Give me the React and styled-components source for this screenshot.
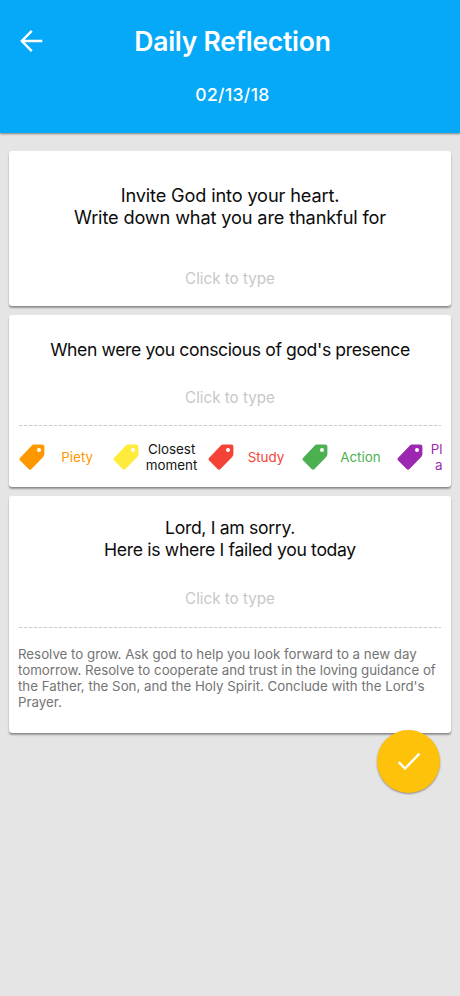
import React from 'react'
import styled, { createGlobalStyle } from 'styled-components';

const GlobalStyle = createGlobalStyle`
* {
  box-sizing: border-box;
}
body {
  margin: 0;
  background: #e5e5e5;
  font-family: Inter, "Liberation Sans", sans-serif;
}
`;

const Container = styled.div`
min-height: 996px;
background: #e5e5e5;
`;
const Header = styled.header`
height: 133px;
padding-top: 24px;
background: #05a9f7;
color: white;
box-shadow: 0 1px 2px rgba(0, 0, 0, 0.45);
`;
const TitleRow = styled.div`
display: grid;
grid-template-columns: 64px 1fr 60px;
align-items: center;
height: 34px;
`;
const BackButton = styled.button`
display: flex;
width: 24px;
height: 24px;
margin-left: 19px;
padding: 0;
border: none;
background: none;
`;
const Title = styled.h1`
margin: 0;
padding-left: 1px;
font-size: 26.5px;
font-weight: 600;
line-height: 34px;
letter-spacing: -0.25px;
text-align: center;
white-space: nowrap;
`;
const DateText = styled.div`
margin-top: 26px;
padding-left: 5px;
font-size: 17.5px;
font-weight: 500;
line-height: 22px;
letter-spacing: 0.35px;
text-align: center;
`;
const Cards = styled.main`
padding: 18px 9px 0;
`;
const Card = styled.section`
height: ${(props) => props.$height}px;
margin-bottom: 9px;
padding: ${(props) => props.$top}px 9px 0;
border-radius: 3px;
background: white;
box-shadow: 0 2px 2px rgba(0, 0, 0, 0.32), 0 1px 1px rgba(0, 0, 0, 0.12);
`;
const Prompt = styled.h2`
margin: 0;
color: #0c0c0c;
font-size: ${(props) => props.$size || 17.6}px;
font-weight: 400;
line-height: ${(props) => props.$line || 22}px;
letter-spacing: ${(props) => props.$spacing || 0}px;
text-align: center;
white-space: nowrap;
`;
const Answer = styled.div`
margin-top: ${(props) => props.$gap}px;
color: #c7c7c9;
font-size: 15.2px;
line-height: 20px;
text-align: center;
`;
const Divider = styled.div`
height: 1px;
margin: ${(props) => props.$gap}px 1px 0;
background: repeating-linear-gradient(90deg, #cbcbcb 0 3px, #f4f4f4 3px 5px);
`;
const Tags = styled.div`
display: flex;
height: 62px;
margin: 0 0 0 1px;
overflow: hidden;
`;
const Tag = styled.div`
display: flex;
flex: 0 0 ${(props) => (props.$last ? 46 : 94.4)}px;
align-items: center;
color: ${(props) => props.color};
`;
const TagLabel = styled.span`
flex: 1;
padding: ${(props) => (props.$right ? "1px 0 0" : "1px 4px 0 0")};
color: ${(props) => props.$text};
font-size: 13.4px;
line-height: 15.5px;
text-align: ${(props) => (props.$right ? "right" : "center")};
white-space: pre-line;
`;
const Closing = styled.p`
margin: 19px 0 0;
color: #747474;
font-size: 13.3px;
line-height: 15.9px;
white-space: pre-line;
`;
const DoneButton = styled.button`
position: absolute;
top: 730px;
left: 377px;
display: flex;
align-items: center;
justify-content: center;
width: 63px;
height: 63px;
padding: 0;
border: none;
border-radius: 50%;
background: #fec20b;
box-shadow: 0 1px 2px rgba(0, 0, 0, 0.4);
`;

const tags = [
  { label: "Piety", color: "#ff9800" },
  { label: "Closest\nmoment", color: "#ffeb3b", text: "#151515" },
  { label: "Study", color: "#f44336" },
  { label: "Action", color: "#4caf50" },
  { label: "Pl\na", color: "#9c27b0" },
];

const BackIcon = () => (
  <svg width="24" height="24" viewBox="0 0 24 24" fill="none" stroke="white" strokeWidth="2.4">
    <path d="M23.3 12H3.5M12.8 1.9L2.8 12L12.8 22.1" />
  </svg>
);

const TagIcon = () => (
  <svg width="26" height="27" viewBox="0 0 26 27" fill="currentColor">
    <path
      fillRule="evenodd"
      d="M15 .6H22.8Q25.4 .6 25.4 3V9.8Q25.4 11.7 24.2 13L12.5 25Q11 26.4 9.6 25L1.2 16.5Q-.2 15.2 1.2 13.8L12.6 1.7Q13.6.6 15 .6ZM20 3.9a2 2 0 1 0 0 4a2 2 0 1 0 0-4Z"
    />
  </svg>
);

const CheckIcon = () => (
  <svg width="26" height="22" viewBox="0 0 26 22" fill="none" stroke="white" strokeWidth="2.4">
    <path d="M2.6 11L9 17.6L23.4 2.6" />
  </svg>
);

const App = () => {
  return (
    <Container>
      <GlobalStyle />
      <Header>
        <TitleRow>
          <BackButton aria-label="Back"><BackIcon /></BackButton>
          <Title>Daily Reflection</Title>
        </TitleRow>
        <DateText>02/13/18</DateText>
      </Header>
      <Cards>
        <Card $height={155} $top={32.5}>
          <Prompt $size={18.2} $spacing={-0.15}>Invite God into your heart.<br />Write down what you are thankful for</Prompt>
          <Answer $gap={41}>Click to type</Answer>
        </Card>
        <Card $height={172} $top={23.5}>
          <Prompt $spacing={-0.39}>When were you conscious of god's presence</Prompt>
          <Answer $gap={27}>Click to type</Answer>
          <Divider $gap={17.5} />
          <Tags>
            {tags.map((tag, i) => (
              <Tag key={tag.label} color={tag.color} $last={i === tags.length - 1}>
                <TagIcon />
                <TagLabel $text={tag.text || tag.color} $right={i === tags.length - 1}>{tag.label}</TagLabel>
              </Tag>
            ))}
          </Tags>
        </Card>
        <Card $height={236.5} $top={21}>
          <Prompt $line={21.5} $spacing={-0.32}>Lord, I am sorry.<br />Here is where I failed you today</Prompt>
          <Answer $gap={29}>Click to type</Answer>
          <Divider $gap={18} />
          <Closing>
            {"Resolve to grow. Ask god to help you look forward to a new day\ntomorrow. Resolve to cooperate and trust in the loving guidance of\nthe Father, the Son, and the Holy Spirit. Conclude with the Lord's\nPrayer."}
          </Closing>
        </Card>
      </Cards>
      <DoneButton aria-label="Done"><CheckIcon /></DoneButton>
    </Container>
  )
}

export default App;
